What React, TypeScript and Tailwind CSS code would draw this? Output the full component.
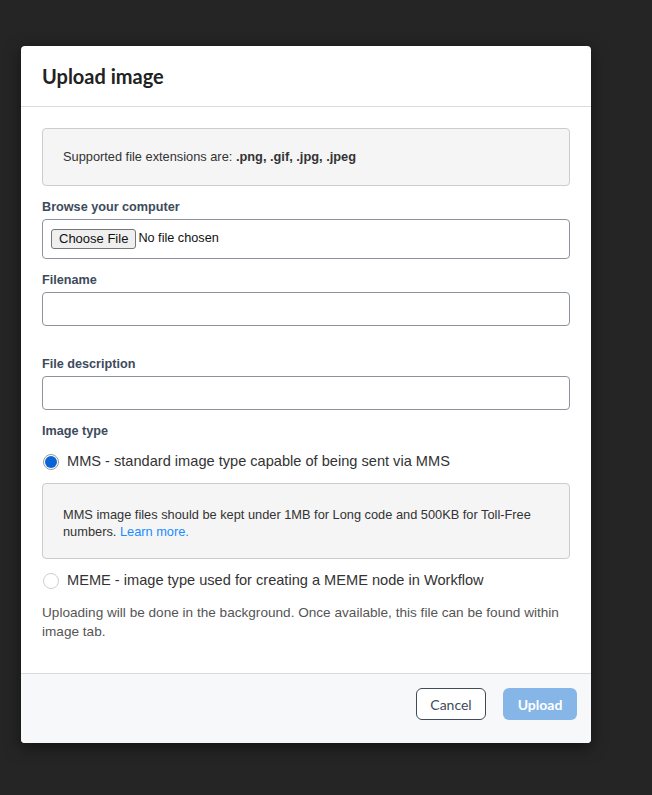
import React from "react";

const sans = { fontFamily: '"Liberation Sans", Arial, sans-serif' };

export default function App() {
  return (
    <div className="w-[652px] h-[795px] bg-[#252525] relative overflow-hidden" style={sans}>
      <div className="h-[46px]" />
      <div className="ml-[21px] w-[570px] h-[697px] bg-white rounded-[4px] shadow-[0_4px_16px_rgba(0,0,0,0.5)] flex flex-col overflow-hidden">
        {/* Header */}
        <div className="h-[61px] border-b border-[#dcdcdc] flex items-center px-[21px] shrink-0">
          <h1 className="text-[20px] font-bold text-[#222] leading-none" style={{ fontFamily: 'Lato, sans-serif' }}>
            Upload image
          </h1>
        </div>
        {/* Body */}
        <div className="flex-1 px-[21px] pt-[21px]">
          <div className="h-[58px] border border-[#cccccc] bg-[#f5f5f5] rounded-[4px] flex items-center px-[20px] text-[12.8px] text-[#333]">
            <span>
              Supported file extensions are: <b>.png, .gif, .jpg, .jpeg</b>
            </span>
          </div>

          <div className="mt-[13px] text-[12.65px] leading-[16px] font-bold text-[#3d4b5c]">Browse your computer</div>
          <div className="mt-[4px] h-[40px] border border-[#8c939c] rounded-[4px] flex items-center px-[8px]">
            <span className="h-[20px] px-[7px] border border-[#767676] bg-[#efefef] rounded-[3px] text-[13px] leading-[18px] text-[#111] flex items-center">
              Choose File
            </span>
            <span className="ml-[2px] text-[12.7px] text-[#111]">No file chosen</span>
          </div>

          <div className="mt-[13px] text-[12.65px] leading-[16px] font-bold text-[#3d4b5c]">Filename</div>
          <div className="mt-[4px] h-[34px] border border-[#8c939c] rounded-[4px]" />

          <div className="mt-[30px] text-[12.65px] leading-[16px] font-bold text-[#3d4b5c]">File description</div>
          <div className="mt-[4px] h-[34px] border border-[#8c939c] rounded-[4px]" />

          <div className="mt-[13px] text-[12.65px] leading-[16px] font-bold text-[#3d4b5c]">Image type</div>

          <div className="mt-[13px] h-[20px] flex items-center">
            <span className="w-[16px] h-[16px] ml-[1px] rounded-full border border-[#9a9a9a] bg-white p-[1px] flex shrink-0">
              <span className="flex-1 rounded-full bg-[#0b63d6]" />
            </span>
            <span className="ml-[8px] text-[14.6px] text-[#333]">MMS - standard image type capable of being sent via MMS</span>
          </div>

          <div className="mt-[11px] border border-[#cccccc] bg-[#f5f5f5] rounded-[4px] pl-[20px] pr-[20px] pt-[22px] pb-[18px] text-[12.8px] leading-[17px] text-[#333]">
            MMS image files should be kept under 1MB for Long code and 500KB for Toll-Free numbers.{" "}
            <span className="text-[#1a8cff]">Learn more.</span>
          </div>

          <div className="mt-[12px] h-[20px] flex items-center">
            <span className="w-[16px] h-[16px] ml-[1px] rounded-full border border-[#cfcfcf] bg-white shrink-0" />
            <span className="ml-[8px] text-[14.6px] text-[#333]">MEME - image type used for creating a MEME node in Workflow</span>
          </div>

          <p className="mt-[12px] text-[13.6px] leading-[19px] text-[#555]">
            Uploading will be done in the background. Once available, this file can be found within image tab.
          </p>
        </div>
        {/* Footer */}
        <div className="h-[70px] shrink-0 border-t border-[#d8dadd] bg-[#f7f8fa] flex justify-end items-start pt-[14px] pr-[14px] gap-[17px]" style={{ fontFamily: 'Lato, sans-serif' }}>
          <button className="w-[70px] h-[32px] rounded-[6px] border border-[#3d4b5c] bg-white text-[14px] text-[#3d4b5c]">
            Cancel
          </button>
          <button className="w-[74px] h-[32px] rounded-[6px] bg-[#86b6e7] text-[14px] font-bold text-white">
            Upload
          </button>
        </div>
      </div>
    </div>
  );
}
